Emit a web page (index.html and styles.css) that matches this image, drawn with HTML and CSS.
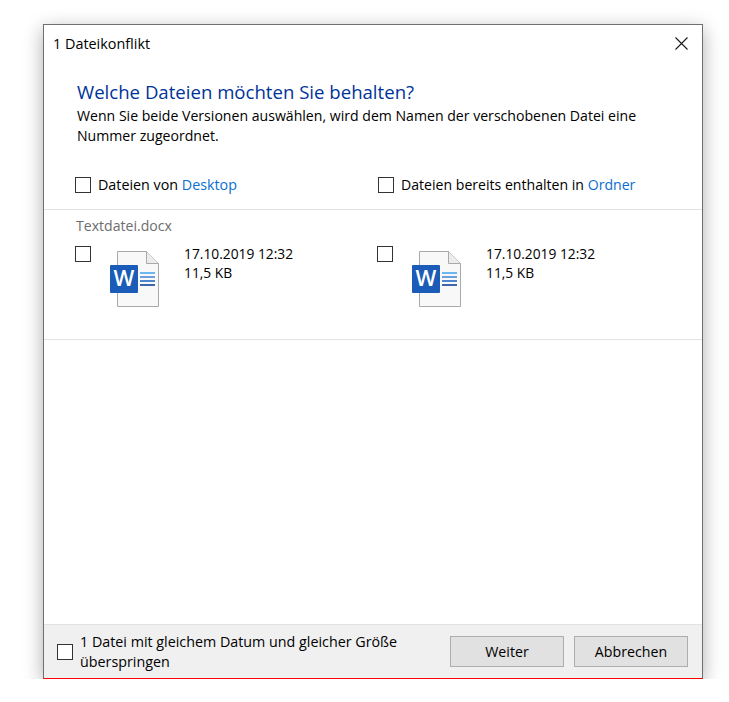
FILE: index.html
```html
<!DOCTYPE html>
<html lang="de">
<head>
    <meta charset="UTF-8">
    <meta name="viewport" content="width=device-width, initial-scale=1.0">
    <title>1 Dateikonflikt</title>
    <link rel="stylesheet" href="styles.css">
</head>
<body>
    <div class="dialog">
        <div class="titlebar">
            <span>1 Dateikonflikt</span>
            <svg class="close" width="13" height="13" viewBox="0 0 13 13">
                <path d="M.5 .5L12.500 12.500M12.500 .5L.5 12.500" stroke="#1a1a1a" stroke-width="1.100" fill="none"/>
            </svg>
        </div>

        <div class="content">
            <div class="intro">
                <h1>Welche Dateien möchten Sie behalten?</h1>
                <p>Wenn Sie beide Versionen auswählen, wird dem Namen der verschobenen Datei eine Nummer zugeordnet.</p>
            </div>

            <div class="sources">
                <label class="source source-left">
                    <span class="check"></span>
                    <span>Dateien von <a href="#desktop">Desktop</a></span>
                </label>
                <label class="source">
                    <span class="check"></span>
                    <span>Dateien bereits enthalten in <a href="#ordner">Ordner</a></span>
                </label>
            </div>

            <div class="conflict">
                <div class="file-name">Textdatei.docx</div>
                <div class="versions">
                    <div class="version">
                        <span class="check"></span>
                        <svg class="file-icon" width="50" height="56" viewBox="0 0 50 56">
                            <path d="M7.500 .5H36.500L48.500 12.500V55.500H7.500Z" fill="#f8f8f8" stroke="#a9a9a9"/>
                            <path d="M36.500 .5V12.500H48.500" fill="#ececec" stroke="#a9a9a9"/>
                            <rect x="30" y="21" width="15" height="2" fill="#6cb6f2"/>
                            <rect x="30" y="25" width="15" height="2" fill="#6d9fdc"/>
                            <rect x="30" y="29" width="15" height="2" fill="#4d86cc"/>
                            <rect x="30" y="33" width="15" height="2" fill="#3f66a8"/>
                            <rect x="0" y="14" width="28" height="28" rx="1" fill="#1a5cb8"/>
                            <text x="14" y="35" class="word-letter" text-anchor="middle">W</text>
                        </svg>
                        <div class="meta">
                            <div>17.10.2019 12:32</div>
                            <div>11,5 KB</div>
                        </div>
                    </div>
                    <div class="version">
                        <span class="check"></span>
                        <svg class="file-icon" width="50" height="56" viewBox="0 0 50 56">
                            <path d="M7.500 .5H36.500L48.500 12.500V55.500H7.500Z" fill="#f8f8f8" stroke="#a9a9a9"/>
                            <path d="M36.500 .5V12.500H48.500" fill="#ececec" stroke="#a9a9a9"/>
                            <rect x="30" y="21" width="15" height="2" fill="#6cb6f2"/>
                            <rect x="30" y="25" width="15" height="2" fill="#6d9fdc"/>
                            <rect x="30" y="29" width="15" height="2" fill="#4d86cc"/>
                            <rect x="30" y="33" width="15" height="2" fill="#3f66a8"/>
                            <rect x="0" y="14" width="28" height="28" rx="1" fill="#1a5cb8"/>
                            <text x="14" y="35" class="word-letter" text-anchor="middle">W</text>
                        </svg>
                        <div class="meta">
                            <div>17.10.2019 12:32</div>
                            <div>11,5 KB</div>
                        </div>
                    </div>
                </div>
            </div>
        </div>

        <div class="footer">
            <label class="skip">
                <span class="check"></span>
                <span>1 Datei mit gleichem Datum und gleicher Größe überspringen</span>
            </label>
            <button>Weiter</button>
            <button>Abbrechen</button>
        </div>
    </div>
</body>
</html>
```

FILE: styles.css
```css
body {
    margin: 0;
    font-family: "Open Sans", "Noto Sans", sans-serif;
    font-size: 14.100px;
    line-height: 20px;
    color: #000;
    background-color: #fff;
}

.word-letter {
    font-family: "Open Sans", sans-serif;
    font-size: 22px;
    font-weight: 600;
    fill: #fff;
}

.dialog {
    width: 658px;
    height: 653px;
    margin: 24px 0 0 43px;
    border: 1px solid #6f6f6f;
    border-bottom-color: #ff0000;
    display: flex;
    flex-direction: column;
    background-color: #fff;
    box-shadow: 0 5px 18px rgba(0, 0, 0, 0.32);
}

.titlebar {
    height: 37px;
    padding: 0 14px 0 9px;
    display: flex;
    align-items: center;
    justify-content: space-between;
    font-size: 14.400px;
    line-height: 18px;
}

.content {
    flex: 1;
}

.intro {
    padding: 18px 40px 0 33px;
}

h1 {
    margin: 0;
    font-size: 18.600px;
    line-height: 24px;
    font-weight: 400;
    color: #003399;
}

.intro p {
    margin: 2px 0 0;
}

.sources {
    margin-top: 29px;
    padding-left: 31px;
    display: flex;
    height: 34px;
}

.source {
    width: 303px;
    display: flex;
    gap: 7px;
}

.source-left {
    font-size: 14.300px;
}

a {
    color: #0a6fd0;
    text-decoration: none;
}

.check {
    flex: none;
    box-sizing: border-box;
    width: 16px;
    height: 16px;
    border: 1px solid #333;
    background-color: #fff;
}

.source .check {
    margin-top: 2px;
}

.conflict {
    height: 129px;
    border-top: 1px solid #e3e3e3;
    border-bottom: 1px solid #e3e3e3;
}

.file-name {
    padding: 6px 0 0 32px;
    color: #6d6d6d;
}

.versions {
    display: flex;
    padding: 10px 0 0 31px;
}

.version {
    width: 302px;
    display: flex;
}

.file-icon {
    flex: none;
    margin: 5px 0 0 19px;
}

.meta {
    margin: -2px 0 0 24px;
    font-size: 13.800px;
    line-height: 19px;
}

.footer {
    flex: none;
    height: 54px;
    box-sizing: border-box;
    padding-right: 14px;
    border-top: 1px solid #e3e3e3;
    background-color: #f0f0f0;
    display: flex;
    align-items: center;
    gap: 10px;
}

.skip {
    flex: 1;
    padding-left: 13px;
    display: flex;
    align-items: center;
    gap: 7px;
    font-size: 14.300px;
}

.skip span:last-child {
    width: 330px;
}

button {
    width: 114px;
    height: 31px;
    padding: 0;
    border: 1px solid #adadad;
    background-color: #e1e1e1;
    color: #000;
    font: inherit;
    font-size: 14.200px;
}
```
